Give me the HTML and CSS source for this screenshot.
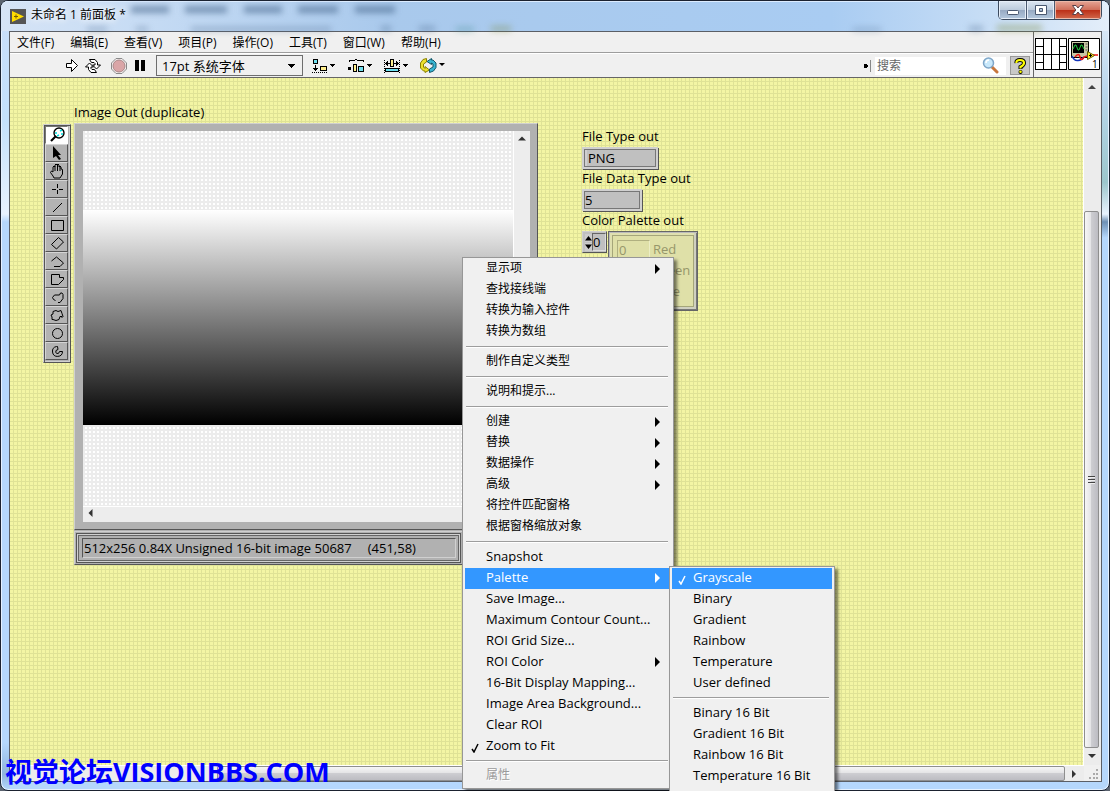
FILE: index.html
```html
<!DOCTYPE html>
<html lang="zh-CN">
<head>
<meta charset="utf-8">
<title>未命名 1 前面板 *</title>
<link rel="stylesheet" href="styles.css">
</head>
<body>
<div class="window">
  <header class="titlebar">
    <svg class="ghost" width="1100" height="30" aria-hidden="true">
      <g fill="#3f5f86" opacity=".55">
        <rect x="130" y="5" width="38" height="7"/><rect x="184" y="5" width="42" height="7"/><rect x="243" y="5" width="38" height="7"/><rect x="297" y="5" width="40" height="7"/><rect x="354" y="5" width="40" height="7"/>
      </g>
      <g fill="#4d6a8c" opacity=".4">
        <rect x="86" y="26" width="20" height="6"/><rect x="135" y="26" width="12" height="6"/><rect x="190" y="26" width="140" height="5"/><rect x="380" y="25" width="10" height="6"/><rect x="418" y="25" width="16" height="6"/>
        <rect x="852" y="27" width="28" height="4"/><rect x="968" y="25" width="14" height="6"/><rect x="996" y="24" width="45" height="7" fill="#7d8a3c"/><rect x="455" y="26" width="18" height="5" fill="#3d8b8b"/><rect x="490" y="25" width="20" height="6" fill="#7d8a3c"/>
      </g>
    </svg>
    <svg class="app-icon" width="16" height="15" viewBox="0 0 16 15"><rect width="16" height="15" fill="#555"/><path d="M2 2l12 5.5L2 13z" fill="#fd0"/><path d="M4 7.500h4M6 5.500v4" stroke="#775c00"/></svg>
    <h1 class="title">未命名 1 前面板 *</h1>
    <div class="caption">
      <button class="cap" aria-label="最小化"><svg width="14" height="12"><rect x="1.500" y="6.500" width="11" height="4" rx="1" fill="#fff" stroke="#4a5870"/></svg></button>
      <button class="cap" aria-label="最大化"><svg width="14" height="12"><path d="M1.500 1.500h11v9h-11zM5.500 4.500v3h3v-3z" fill="#fff" stroke="#4a5870" fill-rule="evenodd"/></svg></button>
      <button class="cap cap-close" aria-label="关闭"><svg width="14" height="12"><path d="M1.500 1.500h3.500l2 2.500 2-2.500h3.500L9.200 6l3.300 4.500H9L7 8l-2 2.500H1.500L4.800 6z" fill="#fff" stroke="#5a4048"/></svg></button>
    </div>
  </header>

  <main class="client">
    <div class="head">
      <div class="bars">
        <nav class="menubar">
          <button>文件(F)</button><button>编辑(E)</button><button>查看(V)</button><button>项目(P)</button><button>操作(O)</button><button>工具(T)</button><button>窗口(W)</button><button>帮助(H)</button>
        </nav>
        <div class="toolbar">
          <button class="tool run" aria-label="运行"><svg width="12" height="13"><path d="M.5 4.500h5v-4l6 6-6 6v-4h-5z" fill="#fff" stroke="#000"/></svg></button>
          <button class="tool loop" aria-label="连续运行"><svg width="16" height="14" fill="#fff" stroke="#000"><path d="M4.500.5h5.500l2.500 3v2.500h3l-4 4-4-4h2.500V4.500L9 3.500H6.500z"/><path d="M11.500 13.500H6L3.500 10.500V8h-3l4-4 4 4H6v1.500l1 1h2.500z"/></svg></button>
          <button class="tool stop" aria-label="中止"><svg width="16" height="16"><path d="M5 .5h6L15.500 5v6L11 15.500H5L.5 11V5z" fill="#f5f0f0" stroke="#8a8a8a"/><circle cx="8" cy="8" r="6" fill="#daa5a7" stroke="#a98788"/></svg></button>
          <button class="tool pause" aria-label="暂停"><svg width="10" height="11"><path d="M0 0h4v11H0zM6 0h4v11H6z"/></svg></button>
          <select class="font-select" aria-label="字体"><option>17pt 系统字体</option></select>
          <button class="tool drop" aria-label="对齐对象"><svg width="24" height="14" shape-rendering="crispEdges"><path d="M1.500.5h4v4h-4z" fill="#6fe0f0" stroke="#000"/><path d="M8.500 7.500h6v4h-6z" fill="#ffef8e" stroke="#000"/><path d="M3 6h1v3h2l-2.500 3L1 9h2z"/><path d="M0 13.500h16" stroke="#000" stroke-dasharray="1 1"/><path d="M17 5h6l-3 3z"/></svg></button>
          <button class="tool drop" aria-label="分布对象"><svg width="24" height="14" shape-rendering="crispEdges"><path d="M1 3V1.500h5.500L8 .5l1.500 1H15V3" fill="none" stroke="#000"/><path d="M0 8h3v3H0z"/><path d="M5.500 5.500h3v7h-3z" fill="#ffef8e" stroke="#000"/><path d="M10.500 7.500h5v5h-5z" fill="#6fe0f0" stroke="#000"/><path d="M18 5h6l-3 3z"/></svg></button>
          <button class="tool drop" aria-label="调整对象大小"><svg width="24" height="14" shape-rendering="crispEdges"><path d="M.5 1v13M15.500 1v13" stroke="#000" stroke-dasharray="1 1"/><path d="M1 4.500h5M10 4.500h5" stroke="#000"/><path d="M4 2v5L1 4.500zM12 2v5l3-2.500z"/><path d="M6.500.5h3v7h-3z" fill="#ffef8e" stroke="#000"/><path d="M1.500 9.500h13v3h-13z" fill="#6fe0f0" stroke="#000"/><path d="M18 5h6l-3 3z"/></svg></button>
          <button class="tool drop" aria-label="重新排序"><svg width="26" height="15"><path d="M6.500.5L3 1.500.5 5v5l3 3H5v1.500L9.500 12 5 8.500v2L3.500 9V6l3-2z" fill="#ebe02c" stroke="#8a8000"/><path d="M9.500 14.500l4-1.500 2.500-3.500V5l-3-3h-1.500V.5L7 3.500l4.500 3V5L13 6v3l-3.500 2z" fill="#38b5d2" stroke="#14586b"/><path d="M19 5h6l-3 3z"/></svg></button>
          <div class="search">
            <svg class="grip" width="7" height="12" shape-rendering="crispEdges"><path d="M0 4h2l2 2-2 2H0z"/><path d="M6.500 0v12" stroke="#888"/></svg>
            <label class="search-box"><input type="text" placeholder="搜索" aria-label="搜索"><svg width="17" height="17"><path d="M10 10l5 5" stroke="#c8763c" stroke-width="3" stroke-linecap="round"/><circle cx="6.500" cy="6" r="5" fill="#c8e8fb" stroke="#7fa6c8" stroke-width="1.500"/><path d="M4 6q0-3 3-3" stroke="#fff" stroke-width="1.500" fill="none"/></svg></label>
            <button class="help" aria-label="即时帮助"><svg width="14" height="16"><path d="M3.500 5Q3 2 7 2t4 3q0 2-3.500 4v2" fill="none" stroke="#000" stroke-width="4"/><circle cx="7.500" cy="14" r="2"/><path d="M3.500 5Q3 2 7 2t4 3q0 2-3.500 4v1.500" fill="none" stroke="#ff0" stroke-width="2.200"/><circle cx="7.500" cy="13.800" r="1.300" fill="#ff0"/></svg></button>
          </div>
        </div>
      </div>
      <div class="vi-icons">
        <svg width="32" height="32" viewBox="0 0 32 32" shape-rendering="crispEdges"><path d="M.5.5h31v31H.5zM8.500 0v32M16.500 0v32M24.500 0v32M0 8.500h8M0 16.500h32M0 24.500h8M24 8.500h8M24 24.500h8" fill="#fff" stroke="#000"/></svg>
        <svg width="32" height="32" viewBox="0 0 32 32"><path d="M.5.5h31v31H.5z" fill="#fff" stroke="#000"/><path d="M3.500 3.500h17v16h-17z" fill="#c9c6a4" stroke="#000"/><path d="M5 5h11v10H5z"/><path d="M5 11l2-4h1l2 5h1l2-5h1l2 4" fill="none" stroke="#1fd03c"/><path d="M17.500 6h2M17.500 9h2M17.500 12h2" stroke="#555"/><path d="M4 18q2 5 6 4.500t6-3.500" fill="none" stroke="#1133bb" stroke-width="1.500"/><path d="M7 19q4-5 5 0t4 0l3-1M25 17h5" fill="none" stroke="#e11" stroke-width="1.500"/><path d="M19.500 13.500l7 4-7 4z" fill="#fe2" stroke="#665c00"/><path d="M21 17.500h3M22.500 16v3" stroke="#000"/><text x="24" y="30" class="vi-num">1</text></svg>
      </div>
    </div>

    <div class="work">
      <section class="panel">
        <div class="image-group">
          <div class="lbl image-label">Image Out (duplicate)</div>
          <div class="tools">
            <button class="on" aria-label="缩放"><svg width="20" height="16"><circle cx="12" cy="6" r="5" fill="#fff" stroke="#000" stroke-width="1.400"/><path d="M9 9l-5 5" stroke="#000" stroke-width="2.200"/><path d="M10 9l2-1M13 4l2-1M9 5v2M15 6v2" stroke="#0dd" stroke-width="1.500"/></svg></button>
            <button aria-label="选择"><svg width="20" height="16"><path d="M6 1v12l3-2 3 4 2-1-3-4h3z"/></svg></button>
            <button aria-label="平移"><svg width="20" height="16"><path d="M6 13L3.500 9.500l1-1.500L6 9V4l1-1 1 1V2l1-1 1 1 1-1 1 1v2l1-1 1 1v2l1 0 .5 1v4l-2.500 4H7zM8 3.500V8M10.500 2v6M13 3.500V8" fill="none" stroke="#000"/></svg></button>
            <button aria-label="点"><svg width="20" height="16" shape-rendering="crispEdges"><path d="M10.500 3v4M10.500 9v4M5 8.500h4M12 8.500h4" stroke="#000"/></svg></button>
            <button aria-label="直线"><svg width="20" height="16"><path d="M6 13l9-9" stroke="#000"/></svg></button>
            <button aria-label="矩形"><svg width="20" height="16"><path d="M4.500 3.500h12v10h-12z" fill="none" stroke="#000"/></svg></button>
            <button aria-label="旋转矩形"><svg width="20" height="16"><path d="M11.500 2.500l5 4.500-7 7-5-4.500z" fill="none" stroke="#000"/></svg></button>
            <button aria-label="折线"><svg width="20" height="16"><path d="M4.500 8l5-4 7 6-3.500 3.500H7" fill="none" stroke="#000"/></svg></button>
            <button aria-label="多边形"><svg width="20" height="16"><path d="M4.500 3.500h8v3h4v2l-5 5h-7z" fill="none" stroke="#000"/></svg></button>
            <button aria-label="徒手线"><svg width="20" height="16"><path d="M8.500 11.500l-2-1-1-2 2-2.500 5 0 1-2h1.500l1 1.500v4l-3 4h-2" fill="none" stroke="#000"/></svg></button>
            <button aria-label="徒手区域"><svg width="20" height="16"><path d="M5 12.500V10l-1-2 2-1V4.500l3-1 2 1 3-1 1 3 1 3-1 1v-1h-2l-1 3-3 1-3-1z" fill="none" stroke="#000"/></svg></button>
            <button aria-label="椭圆"><svg width="20" height="16"><circle cx="10.500" cy="8.500" r="5" fill="none" stroke="#000"/></svg></button>
            <button aria-label="环形"><svg width="20" height="16"><path d="M9.500 3.500a5 5 0 1 0 6 5h-3q-.5 2.500-2.500 2T9 7.500l2-1-.5-3z" fill="none" stroke="#000"/></svg></button>
          </div>
          <div class="display">
            <div class="view">
              <div class="pic"></div>
              <div class="vs"><svg width="8" height="5"><path d="M0 4.500l4-4 4 4z" fill="#333"/></svg></div>
              <div class="hs"><svg width="5" height="8"><path d="M4.500 0l-4 4 4 4z" fill="#333"/></svg></div>
            </div>
            <div class="status"><div class="status-frame"><output class="status-text"><span>512x256 0.84X Unsigned 16-bit image 50687</span><span>(451,58)</span></output></div></div>
          </div>
        </div>

        <div class="outputs">
          <label class="lbl" for="ftype">File Type out</label>
          <input id="ftype" class="field path" readonly value="PNG">
          <label class="lbl" for="fdata">File Data Type out</label>
          <input id="fdata" class="field num" readonly value="5">
          <label class="lbl" for="idx">Color Palette out</label>
          <div class="array">
            <div class="index">
              <svg width="7" height="17"><path d="M0 0h7v8H0zM0 9h7v8H0z" fill="#ccc"/><path d="M0 6.500L3.500 2 7 6.500zM0 10.500h7L3.500 15z"/></svg>
              <input id="idx" readonly value="0">
            </div>
            <div class="cluster"><div class="cluster-in">
              <span class="cell">0</span><span>Red</span>
              <span class="cell">0</span><span>Green</span>
              <span class="cell">0</span><span>Blue</span>
            </div></div>
          </div>
        </div>
      </section>

      <div class="vscroll">
        <button class="sb" aria-label="向上滚动"><svg width="8" height="5"><path d="M0 5l4-4 4 4z" fill="#444"/></svg></button>
        <div class="v-track"></div>
        <div class="v-thumb"><i></i><i></i><i></i></div>
        <button class="sb" aria-label="向下滚动"><svg width="8" height="5"><path d="M0 0h8L4 4z" fill="#333"/></svg></button>
      </div>
      <div class="hscroll">
        <div class="h-track"></div>
        <div class="h-thumb"></div>
        <button class="sb" aria-label="向右滚动"><svg width="5" height="8"><path d="M0 0l4 4-4 4z" fill="#333"/></svg></button>
      </div>
      <div class="corner"><svg width="10" height="10" fill="#aaa"><path d="M7 0h2v2H7zM4 4h2v2H4zM7 4h2v2H7zM0 8h2v2H0zM4 8h2v2H4zM7 8h2v2H7z"/></svg></div>
    </div>
  </main>
</div>

<div class="menu ctx" role="menu">
  <button class="cn sub">显示项</button>
  <button class="cn">查找接线端</button>
  <button class="cn">转换为输入控件</button>
  <button class="cn">转换为数组</button>
  <hr>
  <button class="cn">制作自定义类型</button>
  <hr>
  <button class="cn">说明和提示...</button>
  <hr>
  <button class="cn sub">创建</button>
  <button class="cn sub">替换</button>
  <button class="cn sub">数据操作</button>
  <button class="cn sub">高级</button>
  <button class="cn">将控件匹配窗格</button>
  <button class="cn">根据窗格缩放对象</button>
  <hr>
  <button>Snapshot</button>
  <button class="sub active">Palette</button>
  <button>Save Image...</button>
  <button>Maximum Contour Count...</button>
  <button>ROI Grid Size...</button>
  <button class="sub">ROI Color</button>
  <button>16-Bit Display Mapping...</button>
  <button>Image Area Background...</button>
  <button>Clear ROI</button>
  <button><svg class="check" width="8" height="10"><path d="M1 6l2 3 4-8" fill="none" stroke="currentColor" stroke-width="1.500"/></svg>Zoom to Fit</button>
  <hr>
  <button class="cn" disabled>属性</button>
</div>

<div class="menu palette" role="menu">
  <button class="active"><svg class="check" width="8" height="10"><path d="M1 6l2 3 4-8" fill="none" stroke="currentColor" stroke-width="1.500"/></svg>Grayscale</button>
  <button>Binary</button>
  <button>Gradient</button>
  <button>Rainbow</button>
  <button>Temperature</button>
  <button>User defined</button>
  <hr>
  <button>Binary 16 Bit</button>
  <button>Gradient 16 Bit</button>
  <button>Rainbow 16 Bit</button>
  <button>Temperature 16 Bit</button>
</div>

<div class="watermark">视觉论坛VISIONBBS.COM</div>
</body>
</html>
```
FILE: styles.css
```css
* { box-sizing: border-box; }
html { background: #5c6470; }
body {
  margin: 0;
  position: relative;
  height: 100vh;
  overflow: hidden;
  font: 13px "Open Sans", "Noto Sans CJK SC", sans-serif;
  color: #000;
}
button, input, select { font: inherit; color: inherit; margin: 0; padding: 0; border: 0; background: none; border-radius: 0; outline: 0; }
svg { display: block; flex: none; }

.window {
  display: flex;
  flex-direction: column;
  height: 100%;
  padding: 0 7px 8px 8px;
  border: 1px solid #1b2230;
  border-radius: 8px;
  background:
    linear-gradient(#c9defa, #c4e0fb 15%, #e8f2fe 27%, #b5d7fc 28%, #b5d7fc 94%, #8fb4dc 98%, #b5d7fc) left / 9px 100% no-repeat,
    linear-gradient(#e4eefb, #bcd8ee 11%, #9cc6cc 23%, #e8f2fe 27%, #6e90b5 28%, #b5d7fc 30%, #b5d7fc) right / 8px 100% no-repeat,
    #b5d7fc;
  box-shadow: inset 0 0 0 1px #e5f1ff;
}

/* title bar */
.titlebar {
  position: relative;
  display: flex;
  align-items: center;
  height: 30px;
  flex: none;
  margin: 0 -7px 0 -8px;
  padding-left: 9px;
  border-radius: 7px 7px 0 0;
  background: linear-gradient(90deg, #d6e4f6, #c7dcf4 12%, #a9c9ec 35%, #a9ccf2 75%, #cfe2f6 93%, #e4eefa);
  box-shadow: inset 0 1px #dcecff;
}
.ghost { position: absolute; left: 0; top: 0; filter: blur(3px); }
.app-icon { position: relative; }
.title {
  position: relative;
  flex: 1;
  margin: 0 0 0 5px;
  font-size: 12px;
  font-weight: 400;
  line-height: 16px;
  padding-bottom: 2px;
  text-shadow: 0 0 6px #fff, 0 0 10px #fff;
}
.caption { position: relative; display: flex; align-self: flex-start; margin-right: 7px; border: 1px solid #3c4a5e; border-top: 0; border-radius: 0 0 5px 5px; overflow: hidden; }
.cap { display: flex; align-items: center; justify-content: center; width: 28px; height: 18px; background: linear-gradient(#dce6f2, #bccbdd 48%, #96a9c2 50%, #b4c8de); border-right: 1px solid #4a5870; box-shadow: inset 0 0 0 1px #e6eef8; }
.cap-close { width: 46px; border: 0; background: linear-gradient(#e5a596, #d0705c 48%, #bb2e16 50%, #d2694c); box-shadow: inset 0 0 0 1px #eab8a8; }

/* client area */
.client { flex: 1; min-height: 0; display: flex; flex-direction: column; border: 1px solid #5b5f66; background: #f0f0f0; }
.head { display: flex; flex: none; height: 46px; border-bottom: 1px solid #666; }
.bars { flex: 1; display: flex; flex-direction: column; }
.menubar { display: flex; gap: 16px; height: 21px; padding: 0 7px; border-bottom: 1px solid #9d9d9d; font-size: 12px; line-height: 17px; }
.menubar button { white-space: nowrap; }
.toolbar { flex: 1; display: flex; align-items: center; padding-left: 56px; border-top: 1px solid #fff; }
.tool { flex: none; }
.loop { margin-left: 7px; }
.stop { margin-left: 10px; }
.pause { margin-left: 8px; }
.font-select {
  width: 147px;
  height: 21px;
  margin: 0 9px 0 11px;
  padding-left: 5px;
  appearance: none;
  border: 1px solid #6e6e6e;
  background: linear-gradient(#000, #000) 131px 8px / 7px 1px no-repeat, linear-gradient(#000, #000) 132px 9px / 5px 1px no-repeat, linear-gradient(#000, #000) 133px 10px / 3px 1px no-repeat, linear-gradient(#000, #000) 134px 11px / 1px 1px no-repeat, #f0f0f0;
}
.drop { margin-right: 12px; }
.search { display: flex; align-items: center; margin-left: auto; padding-right: 3px; }
.search-box { display: flex; align-items: center; width: 131px; height: 18px; margin: 0 4px 0 4px; padding: 0 7px 0 2px; background: #fff; }
.search-box input { flex: 1; min-width: 0; font-size: 12px; }
.search-box input::placeholder { color: #666; }
.help { display: flex; justify-content: center; align-items: center; width: 20px; height: 19px; background: #c8c8c8; border: 1px solid #999; }
.vi-icons { display: flex; gap: 1px; padding: 6px 1px 0; border-left: 1px solid #666; }
.vi-num { font-size: 10px; }

.work { flex: 1; min-height: 0; display: grid; grid-template: minmax(0, 1fr) 16px / minmax(0, 1fr) 17px; }
.panel {
  display: flex;
  align-items: flex-start;
  gap: 44px;
  padding: 25px 0 0 33px;
  overflow: hidden;
  border-right: 1px solid #fff;
  background-color: #f3f5a4;
  background-image: linear-gradient(#dfe296 1px, transparent 1px), linear-gradient(90deg, #dfe296 1px, transparent 1px);
  background-size: 4px 4px;
  background-position: 3px 3px;
}
.lbl { font-size: 13px; line-height: 19px; white-space: nowrap; }

.image-group { display: grid; grid-template-columns: 28px 464px; column-gap: 3px; align-items: start; flex: none; }
.image-label { grid-column: 2; padding-bottom: 1px; }
.tools { display: flex; flex-direction: column; margin-top: 1px; padding: 1px 2px 2px 1px; border: 1px solid #d0d0d0; border-right-color: #555; border-bottom-color: #555; background: #b3b3b3; box-shadow: inset 1px 1px #555, inset -1px -1px #d0d0d0; }
.tools button { height: 18px; padding: 0 0 0 1px; background: #b3b3b3; border: 1px solid #d5d5d5; border-right-color: #555; border-bottom-color: #555; }
.tools .on { background: #fff; border-color: #777 #fff #fff #777; }

.display { background: #b1b1b1; }
.view { display: grid; grid-template: 375px 16px / minmax(0, 1fr) 17px; padding: 7px 7px 7px 8px; border: 1px solid #d0d0d0; border-right-color: #555; border-bottom-color: #555; background: #b1b1b1; }
.pic {
  background:
    linear-gradient(#fff, #000) 0 79px / 100% 215px no-repeat,
    repeating-conic-gradient(#fff 0 25%, #ececec 0 100%) 0 0 / 4px 4px;
}
.vs, .hs { background: #ededed; }
.vs { border-left: 1px solid #fff; padding: 5px 4px; }
.hs { grid-column: 1 / 3; border-top: 1px solid #fff; padding: 2px 5px; }
.status { margin-top: 1px; padding: 1px; border: 1px solid #d0d0d0; border-right-color: #555; border-bottom-color: #555; }
.status-frame { width: 385px; height: 30px; padding: 4px 4px 4px 5px; border: 1px solid #555; box-shadow: inset 0 0 0 1px #d0d0d0, inset 0 0 0 2px #666; }
.status-text { display: flex; gap: 16px; height: 100%; padding-left: 1px; border: 1px solid #555; border-right-color: #d0d0d0; border-bottom-color: #d0d0d0; line-height: 18px; white-space: nowrap; }

.outputs { display: flex; flex-direction: column; align-items: flex-start; padding-top: 24px; }
.outputs .lbl { margin-bottom: 1px; }
.field { height: 22px; background: #c0c0c0; border: 2px solid #d0d0d0; outline: 1px solid #777; outline-offset: -3px; padding: 0 0 1px 1px; }
.path { width: 76px; border-left-width: 5px; box-shadow: 1px 1px #555; }
.num { width: 60px; box-shadow: 1px 1px #555; }
.array { display: flex; align-items: flex-start; gap: 1px; }
.index { display: flex; align-items: center; width: 25px; height: 22px; padding-left: 2px; background: #c0c0c0; border: 1px solid #d0d0d0; border-right-color: #555; border-bottom-color: #555; }
.index input { width: 14px; height: 18px; border: 1px solid #666; border-right-color: #ddd; border-bottom-color: #ddd; }
.cluster { width: 90px; height: 80px; padding: 3px; border: 1px solid #666; background: #dfe0b0; box-shadow: inset 1px 1px #bbb, inset -1px -1px #777, inset -3px -3px #d0d0c0; }
.cluster-in { display: grid; grid-template-columns: 33px 1fr; grid-auto-rows: 19px; gap: 2px 3px; height: 72px; padding: 4px 4px; border: 1px solid #a5a67a; background: #dfe0a8; color: #96966a; line-height: 18px; }
.cell { border: 1px solid #b0b080; border-right-color: #ecedc5; border-bottom-color: #ecedc5; padding-left: 1px; }

/* scroll bars */
.sb { display: flex; align-items: center; justify-content: center; flex: none; width: 16px; height: 17px; }
.vscroll { display: flex; flex-direction: column; background: #ececec; }
.v-track { flex: 116; }
.v-thumb { flex: 534; display: flex; flex-direction: column; align-items: center; justify-content: center; gap: 2px; width: 15px; border: 1px solid #8e8e8e; border-radius: 2px; background: linear-gradient(90deg, #f6f6f6, #e4e4e6 45%, #cdcdd1 50%, #bcbcc2); }
.v-thumb i { width: 7px; height: 1px; background: #444; box-shadow: 0 1px #eee; }
.hscroll { display: flex; background: #ececec; border-top: 1px solid #fff; }
.h-track { flex: 207; }
.h-thumb { flex: 848; border: 1px solid #8e8e8e; border-radius: 2px; background: linear-gradient(#f6f6f6, #e4e4e6 45%, #cdcdd1 50%, #bcbcc2); }
.hscroll .sb { height: 15px; width: 19px; }
.corner { display: flex; align-items: flex-end; justify-content: flex-end; padding: 2px; background: #f0f0f0; }

/* pop-up menus over the panel */
.menu { position: absolute; display: flex; flex-direction: column; background: #f0f0f0; border: 1px solid #979797; box-shadow: 3px 3px 3px rgba(0, 0, 0, .5); }
.menu button { position: relative; display: block; flex: none; height: 21px; padding: 0 0 3px 21px; line-height: 18px; text-align: left; white-space: nowrap; }
.menu .cn { font-size: 12px; }
.menu hr { flex: none; width: calc(100% - 4px); height: 2px; margin: 3px 0 4px 1px; border: 0; background: linear-gradient(#9d9d9d 50%, #fff 50%); }
.menu .active { background: #3397ff; color: #fff; }
.menu .sub::after { content: ""; position: absolute; right: 11px; top: 5px; border: 5px solid transparent; border-left-color: currentColor; border-right: 0; }
.menu button:disabled { color: #9a9a9a; text-shadow: 1px 1px #fff; }
.check { position: absolute; left: 6px; top: 7px; }
.ctx { left: 462px; top: 257px; width: 212px; padding: 1px 2px; }
.palette { left: 669px; top: 566px; width: 166px; height: 240px; padding: 1px 2px; }

.watermark { position: absolute; left: 5px; bottom: 0; font-size: 27px; font-weight: 700; line-height: 38px; color: #00f; white-space: nowrap; }
```
